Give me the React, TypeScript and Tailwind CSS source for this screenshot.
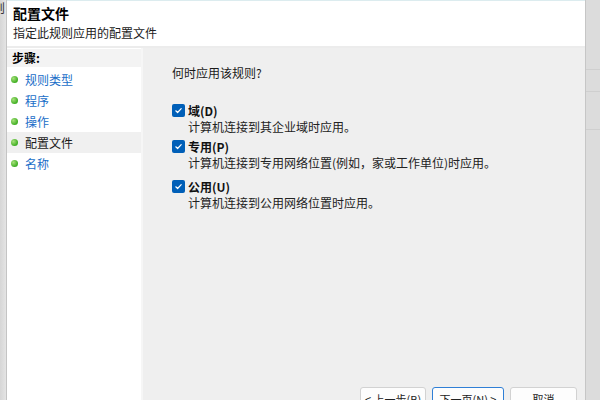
import React from 'react';

const font = { fontFamily: '"Microsoft YaHei", "Noto Sans CJK SC", sans-serif' };

const steps = [
  { label: '规则类型', active: false },
  { label: '程序', active: false },
  { label: '操作', active: false },
  { label: '配置文件', active: true },
  { label: '名称', active: false },
];

const profiles = [
  { title: '域(D)', desc: '计算机连接到其企业域时应用。', gap: 'mb-[4px]' },
  { title: '专用(P)', desc: '计算机连接到专用网络位置(例如，家或工作单位)时应用。', gap: 'mb-[8px]' },
  { title: '公用(U)', desc: '计算机连接到公用网络位置时应用。', gap: '' },
];

const Bullet: React.FC = () => (
  <span className="w-[7px] h-[7px] rounded-full bg-[radial-gradient(circle_at_35%_35%,#a6e07a,#3fae22_70%)] shrink-0" />
);

const CheckBox: React.FC = () => (
  <span className="w-[13px] h-[13px] rounded-[2px] bg-[#005fb8] flex items-center justify-center shrink-0">
    <svg width="9" height="9" viewBox="0 0 9 9" fill="none">
      <path d="M1.8 4.8 L3.6 6.5 L7.2 2.6" stroke="white" strokeWidth="1.2" strokeLinecap="round" strokeLinejoin="round" />
    </svg>
  </span>
);

const App: React.FC = () => {
  return (
    <div className="w-[600px] h-[400px] flex overflow-hidden bg-white text-[12px] text-[#1a1a1a]" style={font}>
      {/* window behind, left edge */}
      <div className="w-[7px] shrink-0 bg-gradient-to-r from-[#d6d6d6] to-[#e4e4e4] border-r border-[#c4c4c4] overflow-hidden">
        <div className="ml-[-7px] mt-[1px] text-[12px] leading-[14px] text-[#333]">则</div>
      </div>

      {/* dialog */}
      <div className="flex-1 flex flex-col min-w-0">
        <div className="h-[46px] shrink-0 bg-white border-t border-[#dcecef] pl-[6px] pt-[3px]">
          <div className="text-[14px] leading-[18px] font-bold text-black">配置文件</div>
          <div className="mt-[3px] text-[12px] leading-[16px] text-[#222]">指定此规则应用的配置文件</div>
        </div>
        <div className="h-[2px] shrink-0 bg-[#ececec]" />

        <div className="flex-1 flex min-h-0">
          {/* steps */}
          <div className="w-[136px] shrink-0 bg-white border-r-2 border-[#f6f6f6] pt-[1px]">
            <div className="h-[18px] bg-[#f3f3f3] pl-[5px] flex items-center font-bold text-black">步骤:</div>
            <div className="mt-[2px] flex flex-col">
              {steps.map(s => (
                <div
                  key={s.label}
                  className={`h-[21px] flex items-center gap-[7px] pl-[4px] ${s.active ? 'bg-[#f0f0f0] text-[#1a1a1a]' : 'text-[#1a6ec8]'}`}
                >
                  <Bullet />
                  <span>{s.label}</span>
                </div>
              ))}
            </div>
          </div>

          {/* content */}
          <div className="flex-1 bg-[#efefef] flex flex-col overflow-hidden">
            <div className="pl-[29px] pt-[17px]">
              <div className="leading-[16px]">何时应用该规则?</div>
              <div className="mt-[22px] flex flex-col">
                {profiles.map(p => (
                  <div key={p.title} className={`flex gap-[3px] ${p.gap}`}>
                    <div className="pt-[1px]"><CheckBox /></div>
                    <div>
                      <div className="font-bold leading-[16px] text-[#111]">{p.title}</div>
                      <div className="leading-[16px] text-[#222]">{p.desc}</div>
                    </div>
                  </div>
                ))}
              </div>
            </div>

            <div className="mt-auto mb-[-11px] flex justify-end gap-[6px] pr-[8px]">
              <button className="w-[66px] h-[24px] bg-[#fdfdfd] border border-[#d2d2d2] rounded-[3px] text-[11px] text-[#222]">
                &lt; 上一步(B)
              </button>
              <button className="w-[72px] h-[24px] bg-[#fdfdfd] border border-[#2f7fd6] rounded-[3px] text-[11px] text-[#222]">
                下一页(N) &gt;
              </button>
              <button className="w-[67px] h-[24px] bg-[#fdfdfd] border border-[#d2d2d2] rounded-[3px] text-[11px] text-[#222]">
                取消
              </button>
            </div>
          </div>
        </div>
      </div>

      {/* window behind, right edge */}
      <div className="w-[15px] shrink-0 bg-[#dcdcdc] border-l border-[#c6c6c6] flex flex-col">
        <div className="h-[70px] border-b border-[#cfcfcf]" />
        <div className="h-[22px] border-b border-[#cfcfcf]" />
        <div className="h-[38px] border-b border-[#cfcfcf]" />
      </div>
    </div>
  );
};

export default App;
